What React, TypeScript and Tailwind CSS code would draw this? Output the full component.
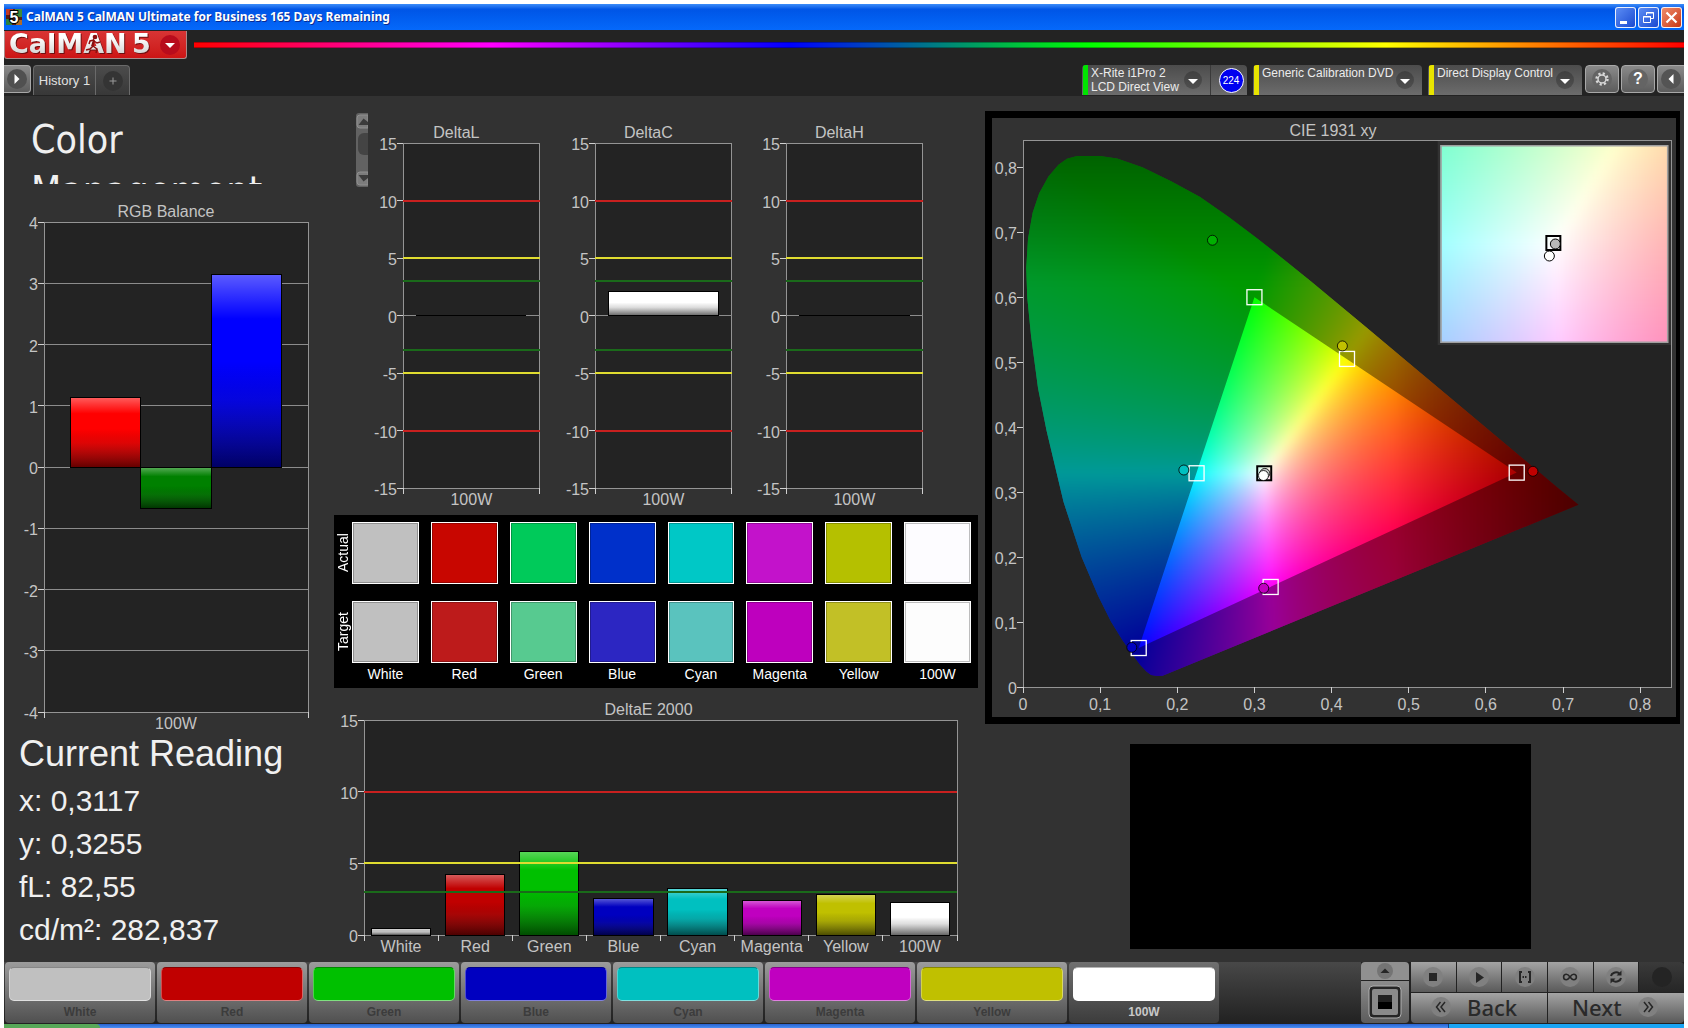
import type { ReactNode } from 'react';

type Bar = { value: number; color: string };
type Category = { label: string; bars: Bar[] };
type Limit = { value: number; color: string };

const BOTH_LIMITS: Limit[] = [
  { value: 10, color: '#c8201f' },
  { value: 5, color: '#e0dc30' },
  { value: 3, color: '#1a6a1a' },
  { value: -3, color: '#1a6a1a' },
  { value: -5, color: '#e0dc30' },
  { value: -10, color: '#c8201f' },
];

const DELTA_TICKS = [15, 10, 5, 0, -5, -10, -15];

const PATCHES = [
  { label: 'White', actual: '#c0c0c0', target: '#c0c0c0', level: '#c0c0c0', delta: 0.42 },
  { label: 'Red', actual: '#c80600', target: '#bd1b1b', level: '#c00000', delta: 4.2 },
  { label: 'Green', actual: '#00ca5a', target: '#57ca90', level: '#00c000', delta: 5.85 },
  { label: 'Blue', actual: '#0030ca', target: '#2c26c2', level: '#0000c0', delta: 2.55 },
  { label: 'Cyan', actual: '#00c8c6', target: '#5ac3be', level: '#00c0c0', delta: 3.25 },
  { label: 'Magenta', actual: '#c312cb', target: '#be00be', level: '#c000c0', delta: 2.4 },
  { label: 'Yellow', actual: '#b5c000', target: '#c2c026', level: '#c0c000', delta: 2.85 },
  { label: '100W', actual: '#fdfcff', target: '#fdfdfd', level: '#ffffff', delta: 2.25 },
];

function BarChart({
  title,
  id,
  min,
  max,
  ticks,
  grid = [],
  limits = [],
  categories,
  titleShift,
  className,
}: {
  title: string;
  id: string;
  min: number;
  max: number;
  ticks: number[];
  grid?: number[];
  limits?: Limit[];
  categories: Category[];
  titleShift: number;
  className: string;
}) {
  const y = (value: number) => ((max - value) / (max - min)) * 100;
  const slot = 100 / categories.length;

  return (
    <svg
      className={`block w-full overflow-visible text-base ${className}`}
      shapeRendering="crispEdges"
      role="img"
      aria-label={title}
    >
      <defs>
        <linearGradient id={id} x1="0" y1="0" x2="0" y2="1">
          <stop offset="0" stopColor="#fff" stopOpacity="0.36" />
          <stop offset="0.1" stopColor="#fff" stopOpacity="0.2" />
          <stop offset="0.23" stopColor="#fff" stopOpacity="0" />
          <stop offset="0.45" stopColor="#000" stopOpacity="0" />
          <stop offset="0.65" stopColor="#222" stopOpacity="0.15" />
          <stop offset="1" stopColor="#000" stopOpacity="0.6" />
        </linearGradient>
      </defs>
      <text x="50%" y="-5" dx={titleShift} textAnchor="middle" fill="#c4c4c4">
        {title}
      </text>
      <rect width="100%" height="100%" fill="#232323" stroke="#949494" />
      {grid.map((value) => (
        <line key={value} x1="0" x2="100%" y1={`${y(value)}%`} y2={`${y(value)}%`} stroke="#8c8c8c" />
      ))}
      {categories.map((category, i) =>
        category.bars.map((bar, j) => {
          const width = (slot * 0.8) / category.bars.length;
          const top = y(Math.max(bar.value, 0));
          const height = y(Math.min(bar.value, 0)) - top;
          const box = {
            x: `${slot * (i + 0.1) + width * j}%`,
            y: `${top}%`,
            width: `${width}%`,
            height: `${height}%`,
          };
          return (
            <g key={j}>
              <rect {...box} fill={bar.color} stroke="#000" />
              <rect {...box} fill={`url(#${id})`} stroke="#000" />
            </g>
          );
        }),
      )}
      {limits.map((limit) => (
        <line
          key={limit.value}
          x1="0"
          x2="100%"
          y1={`${y(limit.value)}%`}
          y2={`${y(limit.value)}%`}
          stroke={limit.color}
          strokeWidth="2"
        />
      ))}
      {ticks.map((value) => (
        <g key={value}>
          <line x1="-6" x2="0" y1={`${y(value)}%`} y2={`${y(value)}%`} stroke="#d0d0d0" />
          <text x="-6" y={`${y(value)}%`} dy="7" textAnchor="end" fill="#c4c4c4">
            {value}
          </text>
        </g>
      ))}
      {categories.map((category, i) => (
        <g key={category.label}>
          <svg x={`${slot * i}%`} y="100%" className="overflow-visible">
            <line x1="0" x2="0" y1="0" y2="6" stroke="#d0d0d0" />
          </svg>
          <svg x={`${slot * (i + 0.5)}%`} y="100%" className="overflow-visible">
            <text y="17" textAnchor="middle" fill="#c4c4c4">
              {category.label}
            </text>
          </svg>
        </g>
      ))}
      <svg x="100%" y="100%" className="overflow-visible">
        <line x1="0" x2="0" y1="0" y2="6" stroke="#d0d0d0" />
      </svg>
    </svg>
  );
}

// Chromaticity to a displayable colour: clamp, scale to the brightest channel,
// then fade towards the deep red and deep green ends.
function xyColor(x: number, y: number) {
  const X = x / y;
  const Z = (1 - x - y) / y;
  const rgb = [
    3.2406 * X - 1.5372 - 0.4986 * Z,
    -0.9689 * X + 1.8758 + 0.0415 * Z,
    0.0557 * X - 0.204 + 1.057 * Z,
  ].map((c) => Math.max(c, 0));
  const peak = Math.max(...rgb);
  const fade = 1 - Math.max(0, x - 0.48) * 2.1 - Math.max(0, y - 0.62) * 1.8;
  return `rgb(${rgb.map((c) => Math.round((c / peak) ** 0.85 * fade * 255)).join(',')})`;
}

function ColorField({
  width,
  height,
  cell,
  x0,
  y0,
  xSpan,
  ySpan,
}: {
  width: number;
  height: number;
  cell: number;
  x0: number;
  y0: number;
  xSpan: number;
  ySpan: number;
}) {
  const cells: ReactNode[] = [];
  for (let px = -cell * 2; px < width + cell * 2; px += cell) {
    for (let py = -cell * 2; py < height + cell * 2; py += cell) {
      const x = x0 + ((px + cell / 2) / width) * xSpan;
      const y = y0 + (1 - (py + cell / 2) / height) * ySpan;
      if (x + y > 1.08) continue;
      cells.push(
        <rect
          key={`${px},${py}`}
          x={px}
          y={py}
          width={cell + 1}
          height={cell + 1}
          fill={xyColor(Math.max(x, 0.001), Math.max(y, 0.005))}
        />,
      );
    }
  }
  return <g>{cells}</g>;
}

const X_MAX = 0.84;
const Y_MAX = 0.842;

const LOCUS: [number, number][] = [
  [0.181, 0.0175], [0.174, 0.017], [0.166, 0.0185], [0.16, 0.024], [0.152, 0.034], [0.142, 0.05],
  [0.129, 0.072], [0.114, 0.101], [0.0975, 0.14], [0.076, 0.2], [0.0525, 0.285], [0.0305, 0.395],
  [0.0195, 0.46], [0.0105, 0.54], [0.0055, 0.6], [0.0042, 0.645], [0.0065, 0.69], [0.0125, 0.73],
  [0.021, 0.76], [0.033, 0.786], [0.046, 0.804], [0.057, 0.813], [0.07, 0.8175], [0.1, 0.8175],
  [0.122, 0.8135], [0.1547, 0.8], [0.192, 0.7785], [0.2296, 0.7543], [0.2658, 0.7243], [0.3016, 0.6923],
  [0.3373, 0.6589], [0.3731, 0.6245], [0.4441, 0.5547], [0.5125, 0.4866], [0.5752, 0.4242],
  [0.627, 0.3725], [0.6658, 0.334], [0.6915, 0.3083], [0.72, 0.2805],
];

const GAMUT: [number, number][] = [[0.3, 0.6], [0.64, 0.33], [0.15, 0.06]];

const toPath = (points: [number, number][]) =>
  `M${points.map(([x, y]) => `${(x / X_MAX) * 649} ${(1 - y / Y_MAX) * 547}`).join('L')}Z`;

const TARGETS = [
  { x: 0.3, y: 0.6 },
  { x: 0.42, y: 0.505 },
  { x: 0.225, y: 0.329 },
  { x: 0.64, y: 0.33 },
  { x: 0.321, y: 0.154 },
  { x: 0.15, y: 0.06 },
];

const READINGS = [
  { x: 0.2456, y: 0.6877, color: '#00b000' },
  { x: 0.414, y: 0.525, color: '#c0c000' },
  { x: 0.2085, y: 0.334, color: '#00c0c0' },
  { x: 0.661, y: 0.332, color: '#c00000' },
  { x: 0.312, y: 0.152, color: '#c000c0' },
  { x: 0.141, y: 0.061, color: '#0000c0' },
  { x: 0.3135, y: 0.3288, color: '#c0c0c0' },
  { x: 0.3117, y: 0.3255, color: '#ffffff' },
];

const comma = (n: number) => (n === 0 ? '0' : n.toFixed(1).replace('.', ','));

function CieChart() {
  const px = (x: number) => `${(x / X_MAX) * 100}%`;
  const py = (y: number) => `${(1 - y / Y_MAX) * 100}%`;
  const steps = [0, 0.1, 0.2, 0.3, 0.4, 0.5, 0.6, 0.7, 0.8];

  return (
    <svg className="block h-[547px] w-full overflow-visible text-base" role="img" aria-label="CIE 1931 xy">
      <defs>
        <clipPath id="locus">
          <path d={toPath(LOCUS)} />
        </clipPath>
        <filter id="smooth" x="0" y="0" width="1" height="1" colorInterpolationFilters="sRGB">
          <feGaussianBlur stdDeviation="4" />
        </filter>
      </defs>
      <text x="50%" y="-4" dx="-14" textAnchor="middle" fill="#c4c4c4">
        CIE 1931 xy
      </text>
      <rect width="100%" height="100%" fill="#232323" />
      <svg width="100%" height="100%" viewBox="0 0 649 547" preserveAspectRatio="none">
        <g clipPath="url(#locus)">
          <g filter="url(#smooth)">
            <ColorField width={649} height={547} cell={5} x0={0} y0={0} xSpan={X_MAX} ySpan={Y_MAX} />
          </g>
          <path d={`M0 0H649V547H0Z${toPath(GAMUT)}`} fillRule="evenodd" fillOpacity="0.4" />
        </g>
      </svg>
      <rect width="100%" height="100%" fill="none" stroke="#949494" shapeRendering="crispEdges" />

      {steps.map((n) => (
        <g key={n} fill="#c4c4c4" shapeRendering="crispEdges">
          <line x1="-6" x2="0" y1={py(n)} y2={py(n)} stroke="#d0d0d0" />
          <text x="-6" y={py(n)} dy="7" textAnchor="end">
            {comma(n)}
          </text>
          <svg x={px(n)} y="100%" className="overflow-visible">
            <line x1="0" x2="0" y1="0" y2="6" stroke="#d0d0d0" />
            <text y="23" textAnchor="middle">
              {comma(n)}
            </text>
          </svg>
        </g>
      ))}

      {TARGETS.map((t) => (
        <svg key={t.x} x={px(t.x)} y={py(t.y)} className="overflow-visible">
          <rect x="-7.500" y="-7.500" width="15" height="15" fill="none" stroke="#fff" strokeWidth="1.300" />
        </svg>
      ))}
      <svg x={px(0.3127)} y={py(0.329)} className="overflow-visible">
        <rect x="-7" y="-7" width="14" height="14" fill="none" stroke="#000" strokeWidth="2" />
      </svg>
      {READINGS.map((r) => (
        <circle key={r.x} cx={px(r.x)} cy={py(r.y)} r="5" fill={r.color} stroke="#000" strokeOpacity="0.8" />
      ))}

      {/* Close-up around the white point */}
      <rect x="64%" y="1" width="36%" height="204" fill="#323232" />
      <svg x="64.4%" y="5" width="35.2%" height="198">
        <svg width="100%" height="100%" viewBox="0 0 228 198" preserveAspectRatio="none">
          <g filter="url(#smooth)">
            <ColorField width={228} height={198} cell={6} x0={0.281} y0={0.301} xSpan={0.063} ySpan={0.056} />
          </g>
        </svg>
        <rect width="100%" height="100%" fill="none" stroke="#a0a0a0" strokeWidth="3" />
        <svg x="50%" y="50%" className="overflow-visible">
          <rect x="-8" y="-8" width="14" height="14" fill="none" stroke="#000" strokeWidth="2" />
          <circle cx="1" cy="0" r="5" fill="#b8b8b8" stroke="#000" />
          <circle cx="-5" cy="12" r="5" fill="#fff" stroke="#000" />
        </svg>
      </svg>
    </svg>
  );
}

function TitleBar() {
  const button = 'flex size-[21px] items-center justify-center rounded-[3px] border border-white/90';
  return (
    <div className="flex h-[26px] items-center gap-0.5 bg-linear-to-b from-[#3b8cf8] via-[#0055e6] via-20% to-[#0569fb] pr-0.5 pl-0.5">
      <svg className="size-4" viewBox="0 0 16 16">
        <rect width="16" height="16" fill="#5a1a10" />
        <path d="M0 0h7v6H0z" fill="#c03a28" />
        <path d="M9 0h7v8H9z" fill="#3f8a3a" />
        <path d="M0 10h6v6H0z" fill="#2a8040" />
        <path d="M10 11h6v5h-6z" fill="#b06a28" />
        <text x="8" y="14" textAnchor="middle" className="text-[16px] font-bold" fill="#fff" stroke="#000" strokeWidth="2" paintOrder="stroke">
          5
        </text>
      </svg>
      <h1 className="ml-0.5 flex-1 font-['Noto_Sans',sans-serif] text-[12px] font-bold text-white [text-shadow:1px_1px_0_#0a2a90]">
        CalMAN 5 CalMAN Ultimate for Business 165 Days Remaining
      </h1>
      <button className={`${button} bg-linear-to-br from-[#5c8cf4] to-[#1c48d0]`} aria-label="Minimize">
        <svg className="size-[19px]" viewBox="0 0 19 19">
          <path d="M4 13h7v3H4z" fill="#fff" />
        </svg>
      </button>
      <button className={`${button} bg-linear-to-br from-[#5c8cf4] to-[#1c48d0]`} aria-label="Restore">
        <svg className="size-[19px]" viewBox="0 0 19 19" fill="none" stroke="#fff">
          <path d="M7.500 7V4.500h7v6H12M7 5h8" />
          <path d="M4.500 8.500h7v6h-7zM4 9h8" />
        </svg>
      </button>
      <button className={`${button} bg-linear-to-br from-[#ee8a68] to-[#c83410]`} aria-label="Close">
        <svg className="size-[19px]" viewBox="0 0 19 19" stroke="#fff" strokeWidth="2.200">
          <path d="M4.500 4.500l10 10M14.500 4.500l-10 10" />
        </svg>
      </button>
    </div>
  );
}

function Caret() {
  return (
    <svg className="mt-1.5 mr-2 size-[18px] shrink-0" viewBox="0 0 18 18">
      <circle cx="9" cy="9" r="9" fill="#000" fillOpacity="0.22" />
      <path d="M4 8h10l-5 5z" fill="#fff" />
    </svg>
  );
}

function Logo() {
  return (
    <button
      className="flex h-7 w-[183px] items-center justify-between rounded-b-[3px] border border-t-0 border-[#a88] bg-linear-to-b from-[#d83434] to-[#cc1414] pr-1.5"
      aria-label="CalMAN 5 menu"
    >
      <svg className="h-7 w-[150px] overflow-visible" viewBox="0 0 150 28">
        <defs>
          <linearGradient id="chrome" x1="0" y1="0" x2="0" y2="1">
            <stop offset="0.3" stopColor="#fff" />
            <stop offset="1" stopColor="#c8c8c8" />
          </linearGradient>
        </defs>
        <g
          className="font-['DejaVu_Sans',sans-serif] text-[27px] font-bold drop-shadow-[1px_1px_0_#701010]"
          fill="url(#chrome)"
        >
          <text x="4" y="22">CalMAN</text>
          <text x="127" y="22">5</text>
        </g>
        <g fill="none" stroke="#8c1010" strokeWidth="1.500">
          <circle cx="90" cy="6" r="1.600" fill="#8c1010" />
          <path d="M89 9l-4 1-1 3M89 9l-1 6 4 3-1 4M88 15l-3 3-4 1M89 10l3 2 3-1" />
        </g>
      </svg>
      <svg className="size-5" viewBox="0 0 20 20">
        <circle cx="10" cy="10" r="10" fill="#b80c1c" />
        <path d="M5 8h10l-5 5z" fill="#fff" />
      </svg>
    </button>
  );
}

function SourceButton({ lines, color, className }: { lines: string[]; color: string; className: string }) {
  return (
    <button className={`flex h-full overflow-hidden rounded-t-[4px] bg-linear-to-b from-[#4c4c4c] to-[#6c6c6c] text-left ${className}`}>
      <span className={`ml-px h-full w-[5px] shrink-0 ${color}`} />
      <span className="flex-1 pt-px pl-[3px] text-xs leading-[14px] whitespace-nowrap text-[#ececec]">
        {lines.map((line) => (
          <span key={line} className="block">
            {line}
          </span>
        ))}
      </span>
      <Caret />
    </button>
  );
}

function Header() {
  const square = 'flex h-7 items-center justify-center border border-[#a8a8a8] bg-linear-to-b from-[#8a8a8a] to-[#5c5c5c]';
  return (
    <header className="bg-[#232323] pt-px">
      <div className="flex h-[34px] items-start gap-[7px]">
        <Logo />
        <div className="mt-[11px] h-1.5 flex-1 border-y border-black/30 bg-[linear-gradient(90deg,#f00,#f0f_20%,#00f_40%,#0f0_60%,#ff0_80%,#f00)]" />
      </div>
      <nav className="flex h-[31px] items-start">
        <button className={`${square} w-[27px] rounded-r-[4px] border-l-0`} aria-label="Show side panel">
          <svg className="size-5" viewBox="0 0 20 20">
            <circle cx="10" cy="10" r="10" fill="#505050" />
            <path d="M7.500 5v10l5-5z" fill="#fff" />
          </svg>
        </button>
        <div className="ml-0.5 flex h-[30px] rounded-t-[4px] border border-b-0 border-[#6a6a6a] bg-linear-to-b from-[#4c4c4c] to-[#383838]">
          <button className="w-[62px] border-r border-[#6a6a6a] text-[13px] text-[#e0e0e0]">History 1</button>
          <button className="flex w-[33px] items-center justify-center" aria-label="Add history tab">
            <svg className="size-5" viewBox="0 0 20 20">
              <circle cx="10" cy="10" r="10" fill="#343434" />
              <path d="M10 6.500v7M6.500 10h7" stroke="#9a9a9a" />
            </svg>
          </button>
        </div>

        <div className="ml-auto flex h-[30px]">
          <SourceButton lines={['X-Rite i1Pro 2', 'LCD Direct View']} color="bg-[#00e400]" className="w-[129px] rounded-tr-none border-r border-[#3a3a3a]" />
          <div className="flex w-9 items-center justify-center rounded-tr-[4px] bg-linear-to-b from-[#4c4c4c] to-[#6c6c6c] pl-1">
            <span className="flex size-[25px] items-center justify-center rounded-full border border-white bg-[#0000f0] text-[10px] text-white">224</span>
          </div>
          <SourceButton lines={['Generic Calibration DVD']} color="bg-[#e8e400]" className="ml-1.5 w-[169px]" />
          <SourceButton lines={['Direct Display Control']} color="bg-[#e8e400]" className="ml-1.5 w-[154px]" />
        </div>
        <div className="ml-[3px] flex gap-0.5">
          <button className={`${square} w-[34px] rounded-[4px]`} aria-label="Settings">
            <svg className="size-5" viewBox="0 0 20 20">
              <circle cx="10" cy="10" r="10" fill="#646464" />
              <circle cx="10" cy="10" r="5.500" fill="none" stroke="#d8d8d8" strokeWidth="2.400" strokeDasharray="2.160 2.160" />
              <circle cx="10" cy="10" r="4" fill="#646464" stroke="#d8d8d8" strokeWidth="1.500" />
            </svg>
          </button>
          <button className={`${square} w-[34px] rounded-[4px]`} aria-label="Help">
            <span className="flex size-5 items-center justify-center rounded-full bg-[#646464] text-base font-bold text-white">?</span>
          </button>
          <button className={`${square} w-[27px] rounded-l-[4px] border-r-0`} aria-label="Collapse">
            <svg className="size-5" viewBox="0 0 20 20">
              <circle cx="10" cy="10" r="10" fill="#545454" />
              <path d="M12.500 5v10l-5-5z" fill="#fff" />
            </svg>
          </button>
        </div>
      </nav>
    </header>
  );
}

function ScrollBar() {
  return (
    <svg className="mt-[17px] h-[74px] w-3 shrink-0" viewBox="0 0 12 74">
      <path d="M3 0h9v74H3a3 3 0 0 1-3-3V3a3 3 0 0 1 3-3z" fill="#626262" />
      <path d="M12 2H4a3 3 0 0 0-3 3v7a3 3 0 0 0 3 3h8zM12 59H4a3 3 0 0 0-3 3v7a3 3 0 0 0 3 3h8z" fill="#7c7c7c" stroke="#909090" />
      <path d="M12 20H8a6 6 0 0 0-6 6v10a6 6 0 0 0 6 6h4z" fill="#444" />
      <path d="M2.500 12h9.500V9L7.500 5.500zM2.500 62h9.500v3l-4.500 3.500z" fill="#3c3c3c" />
    </svg>
  );
}

function Swatches() {
  return (
    <section className="bg-black pt-[7px] pr-[7px] pb-[3px] text-sm text-white">
      {(['actual', 'target'] as const).map((row) => (
        <div key={row} className={row === 'actual' ? 'mb-[17px] flex' : 'flex'}>
          <div className="w-[18px] rotate-180 text-center text-sm leading-[18px] [writing-mode:vertical-rl]">
            {row === 'actual' ? 'Actual' : 'Target'}
          </div>
          <div className="grid flex-1 grid-cols-8 gap-3">
            {PATCHES.map((patch) => (
              <div
                key={patch.label}
                className="h-[62px] border border-white shadow-[inset_0_0_0_1px_rgba(0,0,0,0.25)]"
                style={{ backgroundColor: patch[row] }}
              />
            ))}
          </div>
        </div>
      ))}
      <div className="ml-[18px] grid grid-cols-8 gap-3 pt-px text-center leading-[21px]">
        {PATCHES.map((patch) => (
          <span key={patch.label}>{patch.label}</span>
        ))}
      </div>
    </section>
  );
}

function LeftColumn() {
  return (
    <div>
      <div className="ml-[27px] h-[88px] overflow-hidden pt-[18px] font-['DejaVu_Sans_Condensed','DejaVu_Sans',sans-serif] text-[39px] leading-[51px] text-[#f0f0f0] [font-stretch:condensed]">
        Color Management
      </div>
      <div className="mt-[38px] mr-[26px] ml-10">
        <BarChart
          title="RGB Balance"
          id="rgb-shade"
          min={-4}
          max={4}
          ticks={[4, 3, 2, 1, 0, -1, -2, -3, -4]}
          grid={[3, 2, 1, 0, -1, -2, -3]}
          titleShift={-10}
          className="h-[490px]"
          categories={[
            {
              label: '100W',
              bars: [
                { value: 1.13, color: '#ff0000' },
                { value: -0.68, color: '#008000' },
                { value: 3.14, color: '#0000ff' },
              ],
            },
          ]}
        />
      </div>
      <div className="mt-5 ml-[15px] text-[30px] leading-[43px] whitespace-nowrap text-[#f0f0f0]">
        <h2 className="mb-[3px] text-4xl leading-[44px]">Current Reading</h2>
        <p>x: 0,3117</p>
        <p>y: 0,3255</p>
        <p>fL: 82,55</p>
        <p>cd/m²: 282,837</p>
      </div>
    </div>
  );
}

function MiddleColumn() {
  const deltas = [
    { title: 'DeltaL', value: 0.01 },
    { title: 'DeltaC', value: 2.05 },
    { title: 'DeltaH', value: 0.01 },
  ];
  return (
    <div className="pr-[7px]">
      <div className="flex h-[419px] items-start pl-[22px]">
        <ScrollBar />
        <div className="mt-[47px] mr-[55px] ml-[35px] grid flex-1 grid-cols-3 gap-[55px]">
          {deltas.map((delta) => (
            <BarChart
              key={delta.title}
              title={delta.title}
              id={`${delta.title}-shade`}
              min={-15}
              max={15}
              ticks={DELTA_TICKS}
              grid={[0]}
              limits={BOTH_LIMITS}
              titleShift={-15}
              className="h-[345px]"
              categories={[{ label: '100W', bars: [{ value: delta.value, color: '#ffffff' }] }]}
            />
          ))}
        </div>
      </div>
      <Swatches />
      <div className="mt-8 mr-[21px] ml-[30px]">
        <BarChart
          title="DeltaE 2000"
          id="delta-e-shade"
          min={0}
          max={15}
          ticks={[15, 10, 5, 0]}
          limits={BOTH_LIMITS.filter((limit) => limit.value > 0)}
          titleShift={-12}
          className="h-[215px]"
          categories={PATCHES.map((p) => ({ label: p.label, bars: [{ value: p.delta, color: p.level }] }))}
        />
      </div>
    </div>
  );
}

function RightColumn() {
  return (
    <div className="pt-[15px]">
      <section className="border-7 border-r-4 border-black bg-[#323232] pt-[22px] pr-[5px] pb-[30px] pl-[31px]">
        <CieChart />
      </section>
      {/* Pattern preview window */}
      <div className="mt-5 flex justify-center pr-1">
        <div className="h-[205px] w-[401px] bg-black" />
      </div>
    </div>
  );
}

function PatchBar() {
  return (
    <div className="flex flex-1 gap-0.5 bg-linear-to-b from-[#484848] to-[#222] pl-px">
      {PATCHES.map((patch) => {
        const active = patch.label === '100W';
        return (
          <button
            key={patch.label}
            className={`flex h-[61px] w-[150px] flex-col rounded-[4px] px-1 pt-[5px] text-xs font-bold ${
              active
                ? 'bg-linear-to-b from-[#707070] to-[#3c3c3c] text-[#c8c8c8]'
                : 'bg-linear-to-b from-[#9c9c9c] to-[#505050] text-[#3c3c3c]'
            }`}
          >
            <span
              className="h-[37px] w-full rounded-[5px] border border-t-black/30 border-r-white/40 border-b-white/50 border-l-white/30"
              style={{ backgroundColor: patch.level }}
            />
            <span className="w-full text-center leading-[22px]">{patch.label}</span>
          </button>
        );
      })}
    </div>
  );
}

function RoundIcon({ children }: { children?: ReactNode }) {
  return (
    <svg className="size-5 shrink-0" viewBox="0 0 20 20">
      <circle cx="10" cy="10" r="10" fill="#808080" />
      {children}
    </svg>
  );
}

const TRANSPORT = [
  { label: 'Stop', icon: <path d="M6 6h8v8H6z" fill="#262626" /> },
  { label: 'Play', icon: <path d="M7 5l8 5.500-8 5.500z" fill="#262626" /> },
  {
    label: 'Read series',
    icon: (
      <g fill="none" stroke="#262626" strokeWidth="2">
        <path d="M7 5H5v10h2M13 5h2v10h-2" />
        <path d="M7.500 10h5" strokeDasharray="1.500 1" />
      </g>
    ),
  },
  {
    label: 'Read continuously',
    icon: (
      <path
        d="M10 10c-1.500-2-2.500-2.700-3.700-2.700a2.700 2.700 0 0 0 0 5.400c1.200 0 2.200-.7 3.700-2.700 1.500-2 2.500-2.700 3.700-2.700a2.700 2.700 0 0 1 0 5.400c-1.200 0-2.200-.7-3.700-2.700z"
        fill="none"
        stroke="#262626"
        strokeWidth="1.600"
      />
    ),
  },
  {
    label: 'Refresh',
    icon: (
      <g fill="none" stroke="#262626" strokeWidth="2">
        <path d="M5 9c.5-3 5-5 8.500-2.500M15 11c-.5 3-5 5-8.500 2.500" />
        <path d="M15.500 3.500v5h-5zM4.500 16.500v-5h5z" fill="#262626" stroke="none" />
      </g>
    ),
  },
];

function Controls() {
  const face = 'bg-linear-to-b from-[#a4a4a4] to-[#5a5a5a]';
  return (
    <div className="flex w-[323px] gap-0.5">
      <div className="flex w-12 flex-col gap-px">
        <button className="flex h-[18px] items-center justify-center rounded-t-[4px] bg-[#909090]" aria-label="Expand">
          <svg className="size-4" viewBox="0 0 16 16">
            <circle cx="8" cy="8" r="8" fill="#747474" />
            <path d="M3.500 10h9L8 5.500z" fill="#262626" />
          </svg>
        </button>
        <button className="flex h-[42px] items-center justify-center rounded-b-[4px] bg-linear-to-b from-[#8c8c8c] to-[#5c5c5c]" aria-label="Pattern window">
          <svg className="h-[34px] w-[34px]" viewBox="0 0 34 34">
            <rect x="1" y="1" width="32" height="32" rx="4" fill="#262626" stroke="#b0b0b0" />
            <rect x="4" y="4" width="26" height="26" rx="2" fill="#8a8a8a" />
            <path d="M10 10h14v14H10z" fill="#000" />
            <path d="M10 10h14v7H10z" fill="#222" />
          </svg>
        </button>
      </div>
      <div className="flex flex-1 flex-col gap-px">
        <div className="grid h-[30px] grid-cols-6 gap-px">
          {TRANSPORT.map((item) => (
            <button key={item.label} className={`flex items-center justify-center ${face}`} aria-label={item.label}>
              <RoundIcon>{item.icon}</RoundIcon>
            </button>
          ))}
          <button className="flex items-center justify-center rounded-tr-[4px] bg-linear-to-b from-[#3a3a3a] to-[#262626]" aria-label="Status">
            <svg className="size-5" viewBox="0 0 20 20">
              <circle cx="10" cy="10" r="10" fill="#242424" />
            </svg>
          </button>
        </div>
        <div className="grid h-[30px] grid-cols-2 gap-px font-['Noto_Sans',sans-serif] text-[22px] leading-7 font-medium text-[#2a2a2a]">
          <button className={`flex items-center gap-4 rounded-bl-[4px] pb-0.5 pl-5 ${face}`}>
            <RoundIcon>
              <path d="M9.500 5l-4 5 4 5M14 5l-4 5 4 5" fill="none" stroke="#262626" strokeWidth="1.500" />
            </RoundIcon>
            Back
          </button>
          <button className={`flex items-center gap-4 rounded-br-[4px] pb-0.5 pl-6 ${face}`}>
            Next
            <RoundIcon>
              <path d="M6 5l4 5-4 5M10.500 5l4 5-4 5" fill="none" stroke="#262626" strokeWidth="1.500" />
            </RoundIcon>
          </button>
        </div>
      </div>
    </div>
  );
}

export default function App() {
  return (
    <div className="flex min-h-screen flex-col overflow-x-hidden bg-white px-1 pt-1 font-['Liberation_Sans',Arial,sans-serif]">
      <TitleBar />
      <Header />
      <main className="grid flex-1 grid-cols-[330fr_651fr_695fr] bg-[#323232] pr-1">
        <LeftColumn />
        <MiddleColumn />
        <RightColumn />
      </main>
      <footer className="flex bg-[#222] pb-px">
        <PatchBar />
        <Controls />
      </footer>
      {/* Edge of the desktop task bar */}
      <div className="flex h-1 bg-linear-to-b from-[#2a62d0] to-[#4a90f4]">
        <div className="w-24 rounded-tr-[4px] bg-[#58a858]" />
        <div className="ml-auto w-[236px] border-l border-[#104080] bg-[#1aa4f4]" />
      </div>
    </div>
  );
}
